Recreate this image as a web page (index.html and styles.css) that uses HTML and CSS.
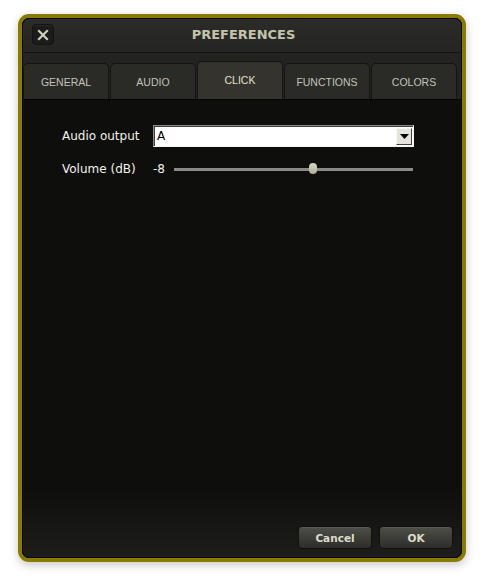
FILE: index.html
```html
<!DOCTYPE html>
<html>
<head>
<meta charset="utf-8">
<link rel="stylesheet" href="styles.css">
</head>
<body>
<div class="window">
  <div class="inner">
    <div class="titlebar">
      <div class="close"><svg width="12" height="12" viewBox="0 0 12 12"><path d="M2 2 L10 10 M10 2 L2 10" stroke="#cfcfbd" stroke-width="2.2" stroke-linecap="square"/></svg></div>
      <div class="title">PREFERENCES</div>
    </div>
    <div class="tabrow">
      <div class="tab">GENERAL</div>
      <div class="tab">AUDIO</div>
      <div class="tab active">CLICK</div>
      <div class="tab">FUNCTIONS</div>
      <div class="tab">COLORS</div>
    </div>
    <div class="content">
      <div class="form">
        <div class="row">
          <div class="label">Audio output</div>
          <div class="select">
            <span class="value">A</span>
            <span class="drop"><svg width="9" height="5" viewBox="0 0 9 5"><path d="M0 0 H9 L4.5 5 Z" fill="#000"/></svg></span>
          </div>
        </div>
        <div class="row row2">
          <div class="label">Volume (dB)</div>
          <div class="vol">-8</div>
          <div class="slider">
            <div class="track"></div>
            <div class="thumb"></div>
          </div>
        </div>
      </div>
      <div class="buttons">
        <div class="btn">Cancel</div>
        <div class="btn">OK</div>
      </div>
    </div>
  </div>
</div>
</body>
</html>
```
FILE: styles.css
```css
html, body { margin: 0; padding: 0; background: #fff; }
body { width: 484px; height: 584px; overflow: hidden; }
.window {
  box-sizing: border-box;
  margin: 14px 0 0 18px;
  width: 448px;
  height: 548px;
  border: 4px solid #877c00;
  border-radius: 11px;
  box-shadow: 0 3px 10px rgba(0,0,0,0.22);
  background: #000;
}
.inner {
  box-sizing: border-box;
  height: 100%;
  border: 1px solid #0a0a09;
  border-radius: 7px;
  overflow: hidden;
  display: flex;
  flex-direction: column;
  background: #0e0e0d;
}
.titlebar {
  height: 33px;
  flex: none;
  display: flex;
  align-items: center;
  position: relative;
  background: linear-gradient(#2b2b28, #242422);
  border-bottom: 1px solid #141412;
}
.close {
  box-sizing: border-box;
  margin-left: 9px;
  margin-top: -2px;
  width: 22px;
  height: 21px;
  border-radius: 4px;
  background: #1b1b19;
  border: 1px solid #131311;
  box-shadow: inset 0 1px 0 #2a2a27;
  display: flex;
  align-items: center;
  justify-content: center;
}
.title {
  position: absolute;
  left: 0; right: 0; top: 0; bottom: 3px;
  display: flex;
  align-items: center;
  justify-content: center;
  font-family: "DejaVu Sans", sans-serif;
  font-weight: bold;
  font-size: 13px;
  color: #c4c4ad;
  pointer-events: none;
  padding-left: 3px;
}
.tabrow {
  height: 47px;
  flex: none;
  box-sizing: border-box;
  display: flex;
  align-items: flex-end;
  gap: 1px;
  background: #232321;
  border-bottom: 1px solid #050505;
  padding-right: 4px;
}
.tab {
  box-sizing: border-box;
  width: 86px;
  height: 36px;
  background: #2a2a27;
  border: 1px solid #141412;
  border-bottom: none;
  border-radius: 5px 5px 0 0;
  display: flex;
  align-items: center;
  justify-content: center;
  font-family: "Liberation Sans", Arial, sans-serif;
  font-size: 10.5px;
  color: #c2c3b8;
  padding-top: 1px;
}
.tab.active {
  height: 38px;
  background: #34332e;
  color: #e2e2cc;
  padding-top: 0;
  padding-bottom: 2px;
}
.content {
  flex: 1;
  display: flex;
  flex-direction: column;
  justify-content: space-between;
  background: linear-gradient(#0e0e0d 0%, #0e0e0d 85%, #1d1d1a 100%);
}
.form {
  padding: 25px 0 0 39px;
  display: flex;
  flex-direction: column;
  gap: 11px;
  font-family: "DejaVu Sans", sans-serif;
  font-size: 12px;
  color: #f2f2ea;
}
.row { display: flex; align-items: center; height: 22px; }
.label { width: 91px; flex: none; }
.select {
  box-sizing: border-box;
  width: 261px;
  height: 22px;
  background: #fff;
  border: 1px solid #8a8a84;
  border-right-color: #f4f4f4;
  border-bottom-color: #f4f4f4;
  box-shadow: inset 1px 1px 0 #404040;
  display: flex;
  align-items: center;
  justify-content: space-between;
  padding: 0 1px 0 3px;
}
.value { color: #000; font-size: 12px; }
.drop {
  box-sizing: border-box;
  width: 16px;
  height: 17px;
  background: #e4e4dc;
  border: 1px solid #f8f8f8;
  border-right-color: #404040;
  border-bottom-color: #404040;
  display: flex;
  align-items: center;
  justify-content: center;
}
.vol { width: 21px; flex: none; }
.slider {
  position: relative;
  width: 239px;
  height: 12px;
}
.track {
  position: absolute;
  left: 0; right: 0; top: 5px;
  height: 3px;
  background: #8a8a86;
}
.thumb {
  position: absolute;
  left: 135px;
  top: 0;
  width: 8px;
  height: 11px;
  border-radius: 4px;
  background: linear-gradient(#d6d6c2, #aeae9a);
}
.buttons {
  display: flex;
  justify-content: flex-end;
  gap: 7px;
  padding: 0 8px 8px 0;
}
.btn {
  box-sizing: border-box;
  width: 74px;
  height: 23px;
  border-radius: 4px;
  border: 1px solid #101010;
  background: linear-gradient(#4f4f49, #2d2d29);
  box-shadow: inset 0 1px 0 #5c5c55;
  display: flex;
  align-items: center;
  justify-content: center;
  font-family: "DejaVu Sans", sans-serif;
  font-weight: bold;
  font-size: 10.5px;
  color: #dcdccc;
}
```
